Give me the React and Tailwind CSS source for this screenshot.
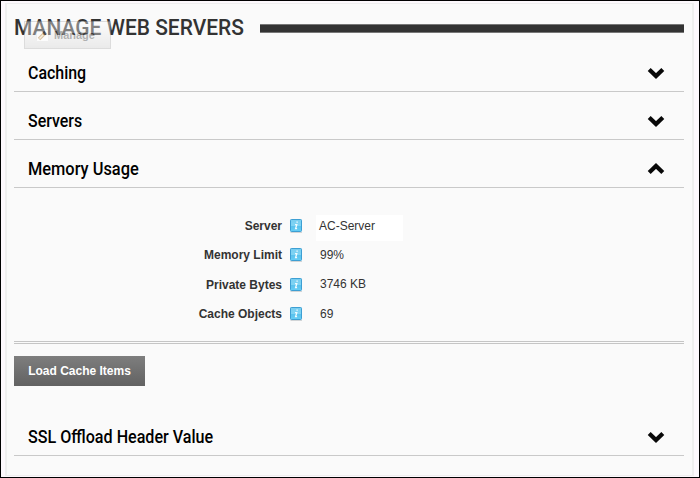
function Chevron({ up }) {
  return (
    <svg className={up ? 'h-3 w-[18px] rotate-180' : 'h-3 w-[18px]'} viewBox="0 0 18 12">
      <path d="M2.2 2.4L9 9L15.8 2.4" fill="none" stroke="#080808" strokeWidth="4.2" />
    </svg>
  );
}

function Section({ title, titleClass, open }) {
  return (
    <div className="flex h-12 items-start justify-between border-b border-[#c9c9c9] pt-[18px] pr-[19px] pl-[14px]">
      <h2 className={`origin-left whitespace-nowrap text-[18px] leading-[22px] font-medium text-black ${titleClass}`}>{title}</h2>
      <div className="pt-[5px]">
        <Chevron up={open} />
      </div>
    </div>
  );
}

function InfoIcon() {
  return (
    <svg className="h-[15px] w-[14px]" viewBox="0 0 14 15">
      <defs>
        <linearGradient id="info" x1="0" y1="0" x2="0" y2="1">
          <stop offset="0" stopColor="#78cdf0" />
          <stop offset="0.5" stopColor="#7fd4f4" />
          <stop offset="0.52" stopColor="#58c1ed" />
          <stop offset="1" stopColor="#66cef5" />
        </linearGradient>
      </defs>
      <path d="M1.5 13.5H13" stroke="#d2d5d7" />
      <rect x="1.5" y="0.5" width="11" height="12" rx="0.8" fill="url(#info)" stroke="#3d9fd3" />
      <path d="M7.4 3.2h1.4M6 5.6h1.8L6.6 9.6h1.5" fill="none" stroke="#f0fbff" strokeWidth="1.3" />
    </svg>
  );
}

function Field({ label, value, rowClass, valueClass }) {
  return (
    <div className={`flex items-start text-[12px] leading-[14px] ${rowClass}`}>
      <div className="w-[268px] text-right font-bold text-[#333]">{label}</div>
      <div className="ml-[7px]">
        <InfoIcon />
      </div>
      <div className={`text-[#333] ${valueClass}`}>{value}</div>
    </div>
  );
}

export default function App() {
  return (
    <div className="h-[478px] w-[700px] overflow-hidden border border-black bg-[#fdf9fd] px-1 pt-[2px] font-['Liberation_Sans',Arial,sans-serif]">
      <div className="mr-[1px] h-[473px] border-x-2 border-t border-b border-[#efefef] bg-[#fafafa] pr-[8px] pl-[7px]">
        <header className="relative flex h-[40px] items-start pt-[9px]">
          <h1 className="w-[246px] whitespace-nowrap text-[22px] leading-[30px] font-medium text-[#333] font-['Roboto',sans-serif]">
            <span className="inline-block origin-left scale-x-[0.952]">MANAGE WEB SERVERS</span>
          </h1>
          <div className="mt-[11px] h-[9px] flex-1 border-y border-[#777] bg-[#333]" />
          <div className="absolute top-[17px] left-[10px] flex h-7 w-[87px] items-center border border-[#b0b0b0] bg-linear-to-b from-white to-[#d4d4d4] pl-[11px] opacity-40">
            <svg className="h-[13px] w-[13px]" viewBox="0 0 13 13">
              <rect x="0.5" y="0.5" width="12" height="12" rx="1" fill="#fff" stroke="#ddd" />
              <path d="M3 10L8.8 4.2" stroke="#a86f28" strokeWidth="3.6" />
              <path d="M3.5 9.5L8.8 4.2" stroke="#f1dda8" strokeWidth="1.4" />
              <path d="M7.5 2.5l3 3" stroke="#555" strokeWidth="2" />
            </svg>
            <span className="ml-[5px] text-[11px] font-bold text-[#444]">Manage</span>
          </div>
        </header>
        <main className="font-['Roboto',sans-serif]">
          <Section title="Caching" titleClass="scale-x-[0.885]" />
          <Section title="Servers" titleClass="scale-x-[0.885]" />
          <Section title="Memory Usage" titleClass="scale-x-[0.91]" open />
          <div className="h-[156px] border-b-[3px] border-double border-[#c5c5c5] pt-[27px] font-['Liberation_Sans',Arial,sans-serif]">
            <Field label="Server" value="AC-Server" rowClass="h-[29px] pt-[4px]" valueClass="-mt-[4px] ml-[13px] h-[26px] w-[87px] bg-white pt-[4px] pl-[3px]" />
            <Field label="Memory Limit" value="99%" rowClass="h-[30px] pt-[4px]" valueClass="ml-[17px]" />
            <Field label="Private Bytes" value="3746 KB" rowClass="h-[29px] pt-[4px]" valueClass="-mt-px ml-[17px]" />
            <Field label="Cache Objects" value="69" rowClass="h-[29px] pt-[4px]" valueClass="ml-[17px]" />
          </div>
          <button className="mt-3 block h-[30px] w-[131px] bg-linear-to-b from-[#7e7e7e] to-[#626262] text-center text-[12px] font-bold text-white font-['Liberation_Sans',Arial,sans-serif]">Load Cache Items</button>
          <div className="mt-[22px]">
            <Section title="SSL Offload Header Value" titleClass="scale-x-[0.895]" />
          </div>
        </main>
      </div>
    </div>
  );
}
